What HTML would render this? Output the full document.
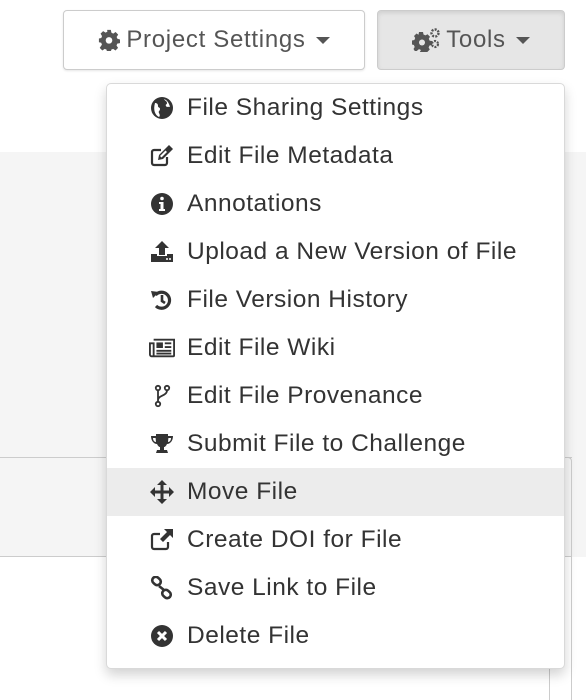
<!DOCTYPE html>
<html><head><style>
*{box-sizing:border-box;margin:0;padding:0}
html,body{width:586px;height:700px;overflow:hidden}
body{background:#fff;font-family:"Liberation Sans",sans-serif;position:relative}
.band{position:absolute;left:0;top:152px;width:586px;height:405px;background:#f5f5f5}
.l1{position:absolute;left:0;top:457px;width:572px;height:1px;background:#ccc}
.l2{position:absolute;left:0;top:556px;width:572px;height:1px;background:#ccc}
.box{position:absolute;left:-10px;top:457px;width:582px;height:243px;border:1px solid #ccc;border-bottom:none;border-radius:4px 4px 0 0}
.white{position:absolute;left:0;top:557px;width:571px;height:143px;background:#fff}
.vl{position:absolute;left:549px;top:668px;width:1px;height:32px;background:#ccc}
.btn{position:absolute;top:10px;height:60px;border:1px solid #ccc;border-radius:4px;font-size:24px;color:#555;display:flex;align-items:center;justify-content:center;gap:6px;letter-spacing:.7px;box-shadow:0 1px 2px rgba(0,0,0,.1)}
.b1{left:63px;width:302px;background:#fff}
.b2{left:377px;width:188px;background:#e6e6e6;box-shadow:inset 0 2px 4px rgba(0,0,0,.1)}
.caret{width:0;height:0;border-left:7px solid transparent;border-right:7px solid transparent;border-top:7px solid #555;margin-left:4px}
.menu{position:absolute;left:106px;top:83px;width:459px;height:586px;background:#fff;border:1px solid rgba(0,0,0,.15);border-radius:5px;box-shadow:0 6px 12px rgba(0,0,0,.175)}
.it{position:absolute;left:0;width:457px;height:48px;font-size:24.5px;color:#333}
.it svg{position:absolute;left:42px;top:12px;width:26px;height:24px}
.it span{position:absolute;left:80px;top:10px;letter-spacing:.5px}
.hl{background:#ececec}
</style></head><body>
<div class="band"></div>
<div class="box"></div>
<div class="white"></div>
<div class="l1"></div><div class="l2"></div>
<div class="vl"></div>
<div class="btn b1"><svg width="22" height="22" viewBox="0 0 24 24"><path fill="#555" d="M10 1h4l.6 3 2 1 2.6-1.7 2.8 2.8L20.3 8.7l.9 2 2.8.7v4l-3 .6-.8 2 1.7 2.6-2.8 2.8-2.6-1.7-2 .8-.6 3h-4l-.6-3-2-.8-2.6 1.7-2.8-2.8L4.3 17l-.8-2L1 14.4v-4l2.6-.6.8-2L2.8 5.1 5.6 2.3 8.2 4l2-1z"/><circle cx="12" cy="12.4" r="3.6" fill="#fff"/></svg>Project Settings<span class="caret"></span></div>
<div class="btn b2"><svg width="28" height="24" viewBox="0 0 28 24"><path fill="#555" d="M7 4h4l.5 2.5 2 .9 2-1.2 2.5 2.5-1.2 2 .9 2L20 13v4l-2.5.5-.9 2 1.2 2-2.5 2.5H7.8l1.2-2-2-.9L4.7 23H2.8L1.5 21l1.2-2-.8-2L0 16.5v-4l2.4-.5.8-2L2 8l2.5-2.5 2 1.2z"/><circle cx="10" cy="14.5" r="3" fill="#e6e6e6"/><circle cx="23" cy="5" r="3.5" fill="none" stroke="#555" stroke-width="2.4" stroke-dasharray="2 1.2"/><circle cx="23" cy="16" r="3" fill="none" stroke="#555" stroke-width="2.2" stroke-dasharray="2 1.2"/></svg>Tools<span class="caret"></span></div>
<div class="menu">
<div class="it" style="top:0"><svg viewBox="0 0 24 24"><circle cx="12" cy="12" r="11" fill="#333"/><path fill="#fff" d="M5 7c2 0 3 1 3 3s2 1 2 3-2 2-1 4 1 3 0 4C5 19 3 14 5 7zM14 3c1 2 3 2 3 4s-2 1-1 3 3 0 4 1c-1-4-3-7-6-8z"/></svg><span>File Sharing Settings</span></div>
<div class="it" style="top:48px"><svg viewBox="0 0 24 24"><path fill="none" stroke="#333" stroke-width="2.2" d="M17 13v6a2 2 0 0 1-2 2H4a2 2 0 0 1-2-2V8a2 2 0 0 1 2-2h7"/><path fill="#333" d="M19 1l4 4-10 10-5 1 1-5z"/><path fill="#fff" d="M10 12l1.5 1.5L17 8l-1.5-1.5z"/></svg><span>Edit File Metadata</span></div>
<div class="it" style="top:96px"><svg viewBox="0 0 24 24"><circle cx="12" cy="12" r="11" fill="#333"/><circle cx="12" cy="6.5" r="1.8" fill="#fff"/><path fill="#fff" d="M9 10h4.5v7H15v2H9v-2h1.5v-5H9z"/></svg><span>Annotations</span></div>
<div class="it" style="top:144px"><svg viewBox="0 0 24 24"><path fill="#333" d="M12 1l7 7h-4v7H9V8H5z"/><path fill="#333" d="M1 14h6v2h10v-2h6v8H1z"/><circle cx="17" cy="19" r="1" fill="#fff"/><circle cx="20" cy="19" r="1" fill="#fff"/></svg><span>Upload a New Version of File</span></div>
<div class="it" style="top:192px"><svg viewBox="0 0 24 24"><path fill="none" stroke="#333" stroke-width="3.2" d="M5.5 7A8 8 0 1 1 6 18"/><path fill="#333" d="M1 3l8 1-6 6z"/><path fill="none" stroke="#333" stroke-width="2.6" d="M12 7v6l3 2"/></svg><span>File Version History</span></div>
<div class="it" style="top:240px"><svg viewBox="0 0 28 24"><path fill="none" stroke="#333" stroke-width="2" d="M5 3h22v17a1 1 0 0 1-1 1H3a2 2 0 0 1-2-2V7h4v13"/><rect x="8" y="6" width="7" height="6" fill="#333"/><path stroke="#333" stroke-width="2" d="M17 7h7M17 11h7M8 15h16M8 18h16"/></svg><span>Edit File Wiki</span></div>
<div class="it" style="top:288px"><svg viewBox="0 0 24 24"><g fill="none" stroke="#333" stroke-width="1.8"><circle cx="8" cy="4" r="2.2"/><circle cx="17" cy="4" r="2.2"/><circle cx="8" cy="20" r="2.2"/><path d="M8 6.2v11.6M17 6.2c0 6-9 5-9 10"/></g></svg><span>Edit File Provenance</span></div>
<div class="it" style="top:336px"><svg viewBox="0 0 24 24"><path fill="#333" d="M6 2h12v2h5c0 5-3 8-6 8-1 2-2 3-3 3v3h3l1 3H6l1-3h3v-3c-1 0-2-1-3-3-3 0-6-3-6-8h5zM3 6c0 2 1 4 3 4L5.6 6zM21 6h-2.6L18 10c2 0 3-2 3-4z"/></svg><span>Submit File to Challenge</span></div>
<div class="it hl" style="top:384px"><svg viewBox="0 0 24 24"><path fill="#333" d="M12 0l5 5h-3.5v5.5H19V7l5 5-5 5v-3.5h-5.5V19H17l-5 5-5-5h3.5v-5.5H5V17l-5-5 5-5v3.5h5.5V5H7z"/></svg><span>Move File</span></div>
<div class="it" style="top:432px"><svg viewBox="0 0 24 24"><path fill="none" stroke="#333" stroke-width="2.2" d="M18 14v5a2 2 0 0 1-2 2H4a2 2 0 0 1-2-2V8a2 2 0 0 1 2-2h6"/><path fill="#333" d="M14 1h9v9l-3-3-7 7-3-3 7-7z"/></svg><span>Create DOI for File</span></div>
<div class="it" style="top:480px"><svg viewBox="0 0 24 24"><g fill="none" stroke="#333" stroke-width="2.6"><rect x="2" y="1.5" width="9" height="7" rx="3.5" transform="rotate(40 6.5 5)"/><rect x="12" y="14.5" width="9" height="7" rx="3.5" transform="rotate(40 16.5 18)"/><path d="M9 10l5 4"/></g></svg><span>Save Link to File</span></div>
<div class="it" style="top:528px"><svg viewBox="0 0 24 24"><circle cx="12" cy="12" r="11" fill="#333"/><path stroke="#fff" stroke-width="3" d="M8 8l8 8M16 8l-8 8"/></svg><span>Delete File</span></div>
</div>
</body></html>
